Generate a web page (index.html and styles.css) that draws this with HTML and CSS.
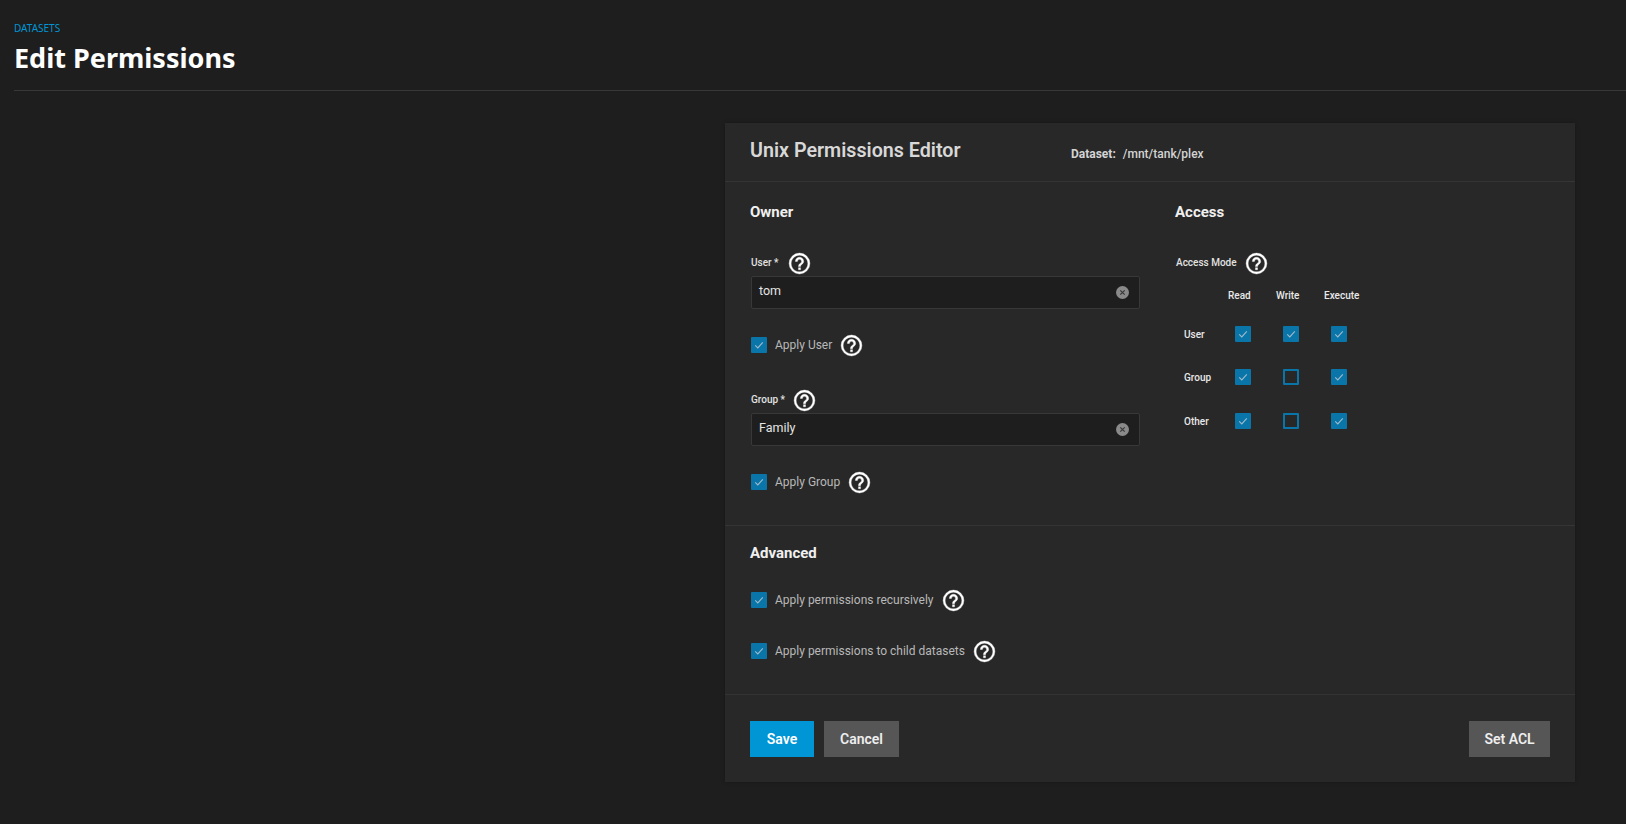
FILE: index.html
```html
<!DOCTYPE html>
<html lang="en">
<head>
<meta charset="utf-8">
<title>Edit Permissions</title>
<link rel="stylesheet" href="styles.css">
</head>
<body>
<svg class="defs" width="0" height="0" aria-hidden="true">
  <symbol id="help" viewBox="0 0 24 24"><path d="M11,18H13V16H11V18M12,2A10,10 0 0,0 2,12A10,10 0 0,0 12,22A10,10 0 0,0 22,12A10,10 0 0,0 12,2M12,20C7.59,20 4,16.41 4,12C4,7.59 7.59,4 12,4C16.41,4 20,7.59 20,12C20,16.41 16.41,20 12,20M12,6A4,4 0 0,0 8,10H10A2,2 0 0,1 12,8A2,2 0 0,1 14,10C14,12 11,11.75 11,15H13C13,12.75 16,12.5 16,10A4,4 0 0,0 12,6Z"/></symbol>
  <symbol id="check" viewBox="0 0 16 16"><path d="M4.2 8.4 6.8 10.9 11.8 5.4" fill="none" stroke="currentColor" stroke-width="1.1"/></symbol>
</svg>
<header class="page-head">
  <div class="crumb">DATASETS</div>
  <h1 class="page-title">Edit Permissions</h1>
  <div class="rule"></div>
</header>
<main class="wrap">
  <section class="card">
    <div class="card-head">
      <h2 class="card-title">Unix Permissions Editor</h2>
      <div class="dataset"><span class="dataset-key">Dataset:</span><span>/mnt/tank/plex</span></div>
    </div>
    <div class="main-section">
      <div class="owner">
        <h3 class="heading">Owner</h3>
        <div class="label-row first"><span class="field-label">User *</span><svg class="help"><use href="#help"/></svg></div>
        <div class="input"><span>tom</span><span class="clear"><svg viewBox="0 0 13 13"><path d="M4.3 4.3 8.7 8.7M8.7 4.3 4.3 8.7"/></svg></span></div>
        <div class="check-row after-input"><span class="box on"><svg><use href="#check"/></svg></span><span class="check-label">Apply User</span><svg class="help"><use href="#help"/></svg></div>
        <div class="label-row second"><span class="field-label">Group *</span><svg class="help"><use href="#help"/></svg></div>
        <div class="input"><span>Family</span><span class="clear"><svg viewBox="0 0 13 13"><path d="M4.3 4.3 8.7 8.7M8.7 4.3 4.3 8.7"/></svg></span></div>
        <div class="check-row after-input"><span class="box on"><svg><use href="#check"/></svg></span><span class="check-label">Apply Group</span><svg class="help"><use href="#help"/></svg></div>
      </div>
      <div class="access">
        <h3 class="heading">Access</h3>
        <div class="label-row first mode"><span class="field-label">Access Mode</span><svg class="help"><use href="#help"/></svg></div>
        <div class="matrix">
          <span></span><span class="col">Read</span><span class="col">Write</span><span class="col">Execute</span>
          <span class="row-name">User</span><span class="box on"><svg><use href="#check"/></svg></span><span class="box on"><svg><use href="#check"/></svg></span><span class="box on"><svg><use href="#check"/></svg></span>
          <span class="row-name">Group</span><span class="box on"><svg><use href="#check"/></svg></span><span class="box"></span><span class="box on"><svg><use href="#check"/></svg></span>
          <span class="row-name">Other</span><span class="box on"><svg><use href="#check"/></svg></span><span class="box"></span><span class="box on"><svg><use href="#check"/></svg></span>
        </div>
      </div>
    </div>
    <div class="advanced">
      <h3 class="heading">Advanced</h3>
      <div class="check-row adv-one"><span class="box on"><svg><use href="#check"/></svg></span><span class="check-label">Apply permissions recursively</span><svg class="help"><use href="#help"/></svg></div>
      <div class="check-row adv-two"><span class="box on"><svg><use href="#check"/></svg></span><span class="check-label">Apply permissions to child datasets</span><svg class="help"><use href="#help"/></svg></div>
    </div>
    <div class="actions">
      <button class="btn primary">Save</button>
      <button class="btn">Cancel</button>
      <button class="btn push">Set ACL</button>
    </div>
  </section>
</main>
</body>
</html>
```
FILE: styles.css
```css
* { box-sizing: border-box; }
html, body { margin: 0; height: 100%; }
body { background: #1e1e1e; font-family: Roboto, sans-serif; color: #fff; overflow: hidden; }
.defs { position: absolute; }
h1, h2, h3 { margin: 0; }

.page-head { padding: 22px 0 0 14px; }
.crumb { font: 400 10px/13px "Noto Sans", sans-serif; color: #0095d5; }
.page-title { font: 700 27px/36px "Noto Sans", sans-serif; margin-top: 5px; }
.rule { height: 1px; background: #383838; margin-top: 14px; }

.wrap { display: flex; justify-content: flex-end; padding: 32px 51px 0 0; }
.card { width: 850px; height: 659px; background: #282828; box-shadow: 0 0 4px rgba(0,0,0,.25); }

.card-head { height: 59px; border-bottom: 1px solid #353535; padding: 0 25px; display: flex; }
.card-title { font: 600 19.7px/24px Roboto, sans-serif; color: #d8d8d8; width: 321px; padding-top: 16px; }
.dataset { font: 500 12px/14px Roboto, sans-serif; color: #d4d4d4; padding-top: 24px; display: flex; gap: 7px; }
.dataset-key { font-weight: 700; }

.main-section { display: flex; height: 344px; padding: 20px 25px 0; border-bottom: 1px solid #353535; }
.owner { width: 426px; padding-left: 1px; padding-right: 36px; }
.heading { font: 700 15px/20px Roboto, sans-serif; color: #f0f0f0; margin-left: -1px; }

.label-row { display: flex; align-items: center; gap: 8px; height: 20px; }
.label-row.first { margin-top: 31px; }
.label-row.second { margin-top: 35px; }
.field-label { font: 500 10px/12px Roboto, sans-serif; color: #e2e2e2; }
.help { width: 25px; height: 25px; flex: none; fill: #fff; stroke: #fff; stroke-width: .35; }
.label-row.second .help { margin-left: -1px; }

.input { height: 33px; margin-top: 3px; padding: 0 7px 5px; background: #1e1e1e; border: 1px solid #383838; border-radius: 2px; display: flex; align-items: center; justify-content: space-between; font-size: 12.5px; color: #e4e4e4; }
.clear { width: 13px; height: 13px; border-radius: 50%; background: #8a8a8a; margin: 5px 3px 0 0; display: block; }
.clear svg { display: block; width: 13px; height: 13px; fill: none; stroke: #3a3a3a; stroke-width: 1.2; }

.check-row { display: flex; align-items: center; height: 20px; }
.after-input { margin-top: 26px; }
.check-label { font: 400 12px/16px Roboto, sans-serif; color: #b8b8b8; margin: 0 7px 0 8px; }

.box { width: 16px; height: 16px; flex: none; border: 2px solid #0a75a8; border-radius: 1px; display: block; }
.box.on { background: #0a75a8; border: 0; color: #a0bccc; }
.box svg { display: block; width: 16px; height: 16px; }

.access { flex: 1; }
.mode { gap: 7px; }
.matrix { display: grid; grid-template-columns: 53px 48px 48px 48px; grid-template-rows: 20px 43px 43px 45px; margin: 13px 0 0 -1px; align-items: center; justify-items: start; }
.col { font: 500 10px/12px Roboto, sans-serif; color: #e8e8e8; }
.row-name { font: 500 10px/12px Roboto, sans-serif; color: #e8e8e8; padding-left: 9px; position: relative; top: 7px; }
.matrix .box { margin-left: 7px; position: relative; top: 6px; }

.advanced { height: 169px; padding: 17px 25px 0; border-bottom: 1px solid #333; }
.advanced .heading { margin-left: 0; }
.advanced .check-row { margin-left: 1px; }
.adv-one { margin-top: 27px; }
.adv-two { margin-top: 31px; }

.actions { display: flex; padding: 26px 25px 0; gap: 10px; }
.btn { height: 36px; border: 0; padding: 0 16px; background: #565656; color: #eee; font: 600 14px/36px Roboto, sans-serif; }
.btn.primary { background: #0095d5; color: #fff; width: 64px; padding: 0; }
.push { margin-left: auto; width: 81px; padding: 0; }
```
